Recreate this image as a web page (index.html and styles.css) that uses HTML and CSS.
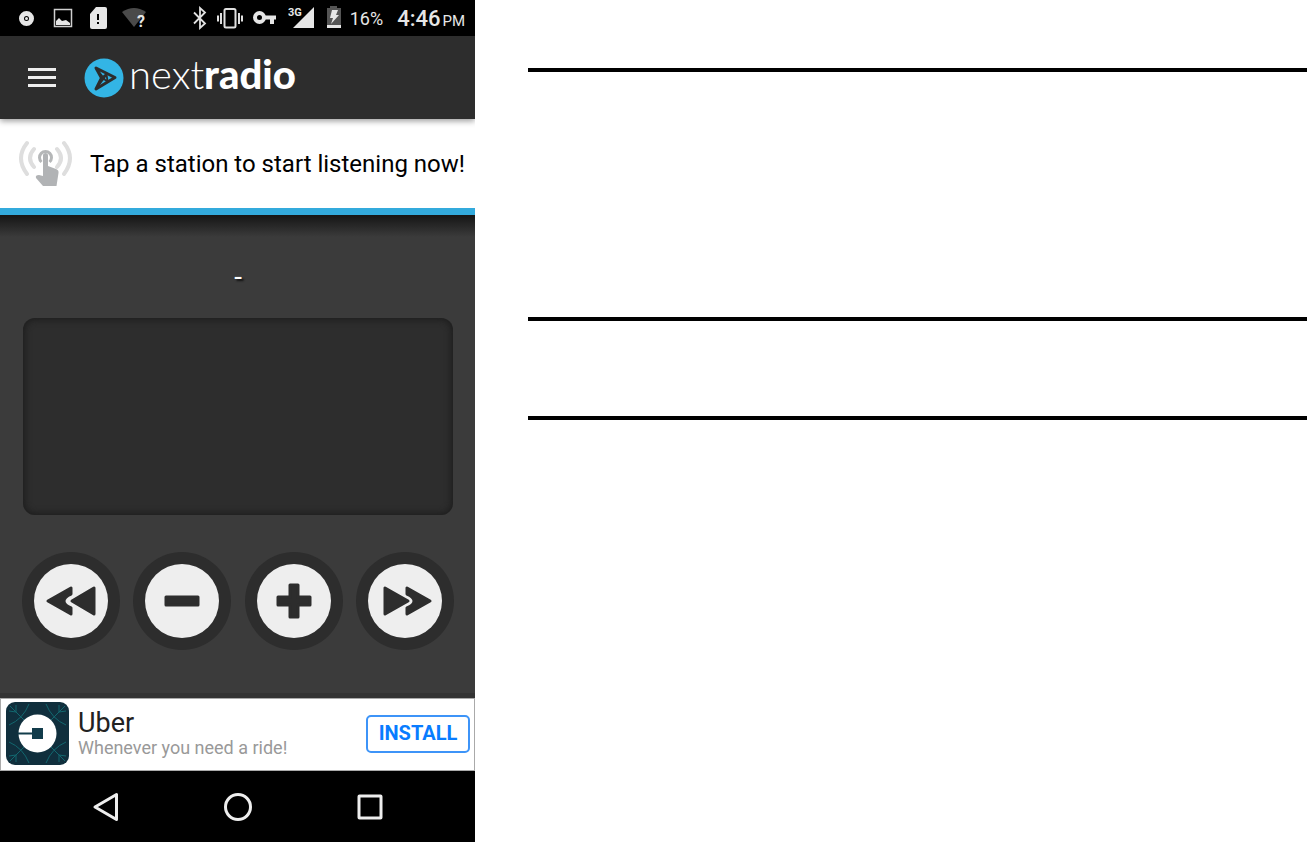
FILE: index.html
```html
<!DOCTYPE html>
<html lang="en">
  <head>
    <meta charset="UTF-8" />
    <meta name="viewport" content="width=device-width, initial-scale=1.0" />
    <title>NextRadio</title>
    <link rel="stylesheet" href="styles.css">
  </head>

  <body>
    <div class="page">
      <main class="phone">
        <div class="status">
          <svg width="20" height="24" viewBox="0 0 20 24">
            <circle cx="8.500" cy="12.500" r="5" fill="none" stroke="#e6e6e6" stroke-width="5" />
            <circle cx="8.500" cy="12.500" r="1.500" fill="#e6e6e6" />
          </svg>
          <svg width="22" height="24" viewBox="0 0 22 24">
            <rect x="2.500" y="3.500" width="17" height="17" fill="none" stroke="#cfcfcf" stroke-width="1.500" />
            <path d="M4 19v-4l3-3 3 3 4-1 4 3v2z" fill="#e6e6e6" />
          </svg>
          <svg width="20" height="24" viewBox="0 0 20 24">
            <path d="M8 1h9q2 0 2 2v18q0 2-2 2H4q-2 0-2-2V8z" fill="#e6e6e6" />
            <path d="M9 8h2v6H9zM9 16h2v2H9z" fill="#000" />
          </svg>
          <svg width="26" height="24" viewBox="0 0 26 24">
            <path d="M0 6q12-8 24 0L12 21z" fill="#4a4a4a" />
            <text x="15" y="21" class="unknown">?</text>
          </svg>

          <div class="status-right">
            <svg width="18" height="24" viewBox="0 0 18 24">
              <path d="M4 6.500l11 11-5 4.500V2l5 4.500-11 11" fill="none" stroke="#e0e0e0" stroke-width="1.800" />
            </svg>
            <svg width="28" height="24" viewBox="0 0 28 24">
              <rect x="8.500" y="3" width="11" height="18.500" rx="1.500" fill="none" stroke="#e0e0e0" stroke-width="2" />
              <path d="M5 7v11M2 9.500v6M23 7v11M26 9.500v6" stroke="#e0e0e0" stroke-width="2" />
            </svg>
            <svg width="28" height="24" viewBox="0 0 28 24">
              <circle cx="7.500" cy="11.500" r="4.500" fill="none" stroke="#e6e6e6" stroke-width="4" />
              <path d="M12 9.500h12v4h-2V18h-4v-4.500h-6z" fill="#e6e6e6" />
            </svg>
            <svg width="28" height="24" viewBox="0 0 28 24">
              <path d="M26 1v21H5z" fill="#e6e6e6" />
              <text x="0" y="10" class="network">3G</text>
            </svg>
            <svg width="18" height="24" viewBox="0 0 18 24">
              <path d="M6 0h7v2h4v20H3V2h3z" fill="#555" />
              <path d="M3 19h14v3H3z" fill="#e6e6e6" />
              <path d="M8 4h6l-2 5h3l-8 9 2-6H6z" fill="#e6e6e6" />
            </svg>
            <span>16%</span>
            <span class="clock">4:46<small>PM</small></span>
          </div>
        </div>

        <header class="header">
          <button class="menu" aria-label="Menu"><i></i><i></i><i></i></button>
          <a href="#" class="logo">
            <svg width="40" height="40" viewBox="0 0 40 40">
              <circle cx="20" cy="20" r="19.500" fill="#33b5e5" />
              <path d="M12 10l19 9.500L12 31l5.500-11z" fill="none" stroke="#2d2d2d" stroke-width="3" stroke-linejoin="round" />
              <path d="M12 10l10 13M12 31l11-15M17.500 20l5-4 1 7z" fill="none" stroke="#2d2d2d" stroke-width="1.800" />
            </svg>
            <span>next<b>radio</b></span>
          </a>
        </header>

        <div class="tip">
          <svg width="56" height="50" viewBox="0 0 56 50">
            <g fill="none" stroke="#dedede" stroke-width="4" stroke-linecap="round">
              <path d="M9 4Q-3 19 9 35M16 10q-8 9 0 18M46 4q12 15 0 31M39 10q8 9 0 18" />
            </g>
            <path d="M23.500 23a6 6 0 1 1 8 0" fill="none" stroke="#b5b7b8" stroke-width="3" />
            <path d="M25 16q0-2 2.500-2t2.500 2v11l8 3q3 1 2.500 4l-2 13H25l-7-8q-1-3 3-3l4 1z" fill="#b1b3b5" />
          </svg>
          <p>Tap a station to start listening now!</p>
        </div>

        <section class="tuner">
          <div class="frequency">-</div>
          <div class="display"></div>
          <div class="controls">
            <button aria-label="Seek down">
              <svg width="74" height="74" viewBox="0 0 74 74">
                <path d="M60 24v26L38 37z" />
                <path d="M37 24v6q-7 3-7 7t7 7v6L14 37z" />
              </svg>
            </button>
            <button aria-label="Tune down">
              <svg width="74" height="74" viewBox="0 0 74 74">
                <path d="M21 33h32v8H21z" />
              </svg>
            </button>
            <button aria-label="Tune up">
              <svg width="74" height="74" viewBox="0 0 74 74">
                <path d="M33 21h8v12h12v8H41v12h-8V41H21v-8h12z" />
              </svg>
            </button>
            <button aria-label="Seek up">
              <svg width="74" height="74" viewBox="0 0 74 74">
                <path d="M17 24v26l23-13z" />
                <path d="M39 24v6q7 3 7 7t-7 7v6l23-13z" />
              </svg>
            </button>
          </div>
        </section>

        <div class="ad">
          <svg width="63" height="63" viewBox="0 0 63 63">
            <rect width="63" height="63" rx="9" fill="#102f3d" />
            <g fill="none" stroke="#12676f" stroke-width="1">
              <path d="M3 23Q17 17 23 2M4 4l17 17M60 23Q46 17 40 2M59 4L42 21M3 40q14 6 20 21M4 59l17-17M60 40q-14 6-20 21M59 59L42 42M3 9l7 1V3M60 9l-7 1V3M3 54l7-1v7M60 54l-7-1v7" />
            </g>
            <circle cx="31.500" cy="31.500" r="19" fill="#fff" />
            <path d="M12 30.500h14V26h11v11H26v-4.500H12z" fill="#123c4b" />
          </svg>
          <div class="ad-text">
            <h2>Uber</h2>
            <p>Whenever you need a ride!</p>
          </div>
          <button class="install">INSTALL</button>
        </div>

        <nav class="nav">
          <button aria-label="Back">
            <svg width="30" height="30" viewBox="0 0 30 30"><path d="M25.500 2.500v25L4 15z" /></svg>
          </button>
          <button aria-label="Home">
            <svg width="30" height="30" viewBox="0 0 30 30"><circle cx="15" cy="15" r="12.500" /></svg>
          </button>
          <button aria-label="Recent apps">
            <svg width="30" height="30" viewBox="0 0 30 30"><rect x="4" y="4" width="22" height="22" rx="0.500" /></svg>
          </button>
        </nav>
      </main>

      <div class="notes">
        <hr />
        <hr />
        <hr />
      </div>
    </div>
  </body>
</html>
```
FILE: styles.css
```css
* {
  box-sizing: border-box;
}
body {
  margin: 0;
  background: #fff;
  font-family: Roboto, "Liberation Sans", sans-serif;
}
button {
  padding: 0;
  border: none;
  background: none;
  font-family: inherit;
}
svg {
  display: block;
  flex: none;
}
p,
h2 {
  margin: 0;
  font-weight: 400;
}
.page {
  display: grid;
  grid-template-columns: 475px 1fr;
  column-gap: 53px;
  min-height: 100vh;
}
.phone {
  display: flex;
  flex-direction: column;
  overflow: hidden;
  background: #3b3b3b;
}

/* status bar */
.status {
  display: flex;
  align-items: center;
  gap: 14px;
  height: 36px;
  padding: 0 10px 0 18px;
  background: #000;
  color: #e6e6e6;
  font-size: 18px;
}
.status-right {
  display: flex;
  align-items: center;
  gap: 8px;
  margin-left: auto;
  white-space: nowrap;
}
.clock {
  margin-left: 6px;
  font-size: 22px;
  font-weight: 500;
}
.clock small {
  margin-left: 2px;
  font-size: 15px;
  font-weight: 400;
}
.unknown {
  fill: #e6e6e6;
  font-size: 16px;
  font-weight: 700;
}
.network {
  fill: #e6e6e6;
  font-size: 11px;
  font-weight: 700;
}

/* app bar */
.header {
  position: relative;
  display: flex;
  align-items: center;
  gap: 28px;
  height: 83px;
  padding: 0 28px;
  background: #2d2d2d;
  box-shadow: 0 2px 6px rgba(0, 0, 0, 0.4);
}
.menu {
  display: grid;
  gap: 5px;
  width: 28px;
}
.menu i {
  height: 3px;
  background: #eee;
}
.logo {
  display: flex;
  align-items: center;
  gap: 5px;
  color: #fff;
  font-family: Lato, sans-serif;
  font-size: 40px;
  font-weight: 300;
  line-height: 32px;
  text-decoration: none;
}
.logo span {
  padding-bottom: 8px;
}
.logo b {
  font-weight: 900;
}

.tip {
  display: flex;
  align-items: center;
  gap: 16px;
  height: 96px;
  padding: 0 0 0 18px;
  border-bottom: 7px solid #33aadc;
  background: #fff;
  color: #000;
  font-size: 24px;
  white-space: nowrap;
}

/* tuner */
.tuner {
  flex: 1;
  padding: 48px 21px 43px 22px;
  border-bottom: 5px solid #333;
  background: linear-gradient(#151515, #3b3b3b 22px);
}
.frequency {
  height: 55px;
  color: #fff;
  font-size: 28px;
  line-height: 28px;
  text-align: center;
  text-shadow: 2px 2px 2px #111;
}
.display {
  height: 197px;
  margin: 0 1px 37px;
  border-radius: 12px;
  background: #2d2d2d;
  box-shadow: inset 0 0 6px 2px #1e1e1e;
}
.controls {
  display: flex;
  justify-content: space-between;
}
.controls button {
  padding: 12px;
  border-radius: 50%;
  background: #2d2d2d;
}
.controls svg {
  border-radius: 50%;
  background: #eee;
  fill: #2d2d2d;
  stroke: #2d2d2d;
  stroke-width: 3;
  stroke-linejoin: round;
}

/* ad banner */
.ad {
  display: flex;
  align-items: center;
  height: 73px;
  padding: 0 4px 2px;
  border: 1px solid #aaa;
  background: #fff;
}
.ad svg {
  margin: 0 9px 0 1px;
}
.ad h2 {
  color: #222;
  font-size: 27px;
  line-height: 28px;
}
.ad-text {
  color: #999;
  font-size: 18px;
  line-height: 22px;
}
.install {
  width: 104px;
  height: 38px;
  margin-left: auto;
  padding-bottom: 2px;
  border: 2px solid #3d94f8;
  border-radius: 5px;
  color: #087cff;
  font-size: 20px;
  font-weight: 700;
}

.nav {
  display: flex;
  justify-content: center;
  gap: 102px;
  height: 71px;
  background: #000;
}
.nav svg {
  fill: none;
  stroke: #eee;
  stroke-width: 3;
  stroke-linejoin: round;
}

/* ruled area beside the phone */
.notes {
  padding-top: 68px;
}
.notes hr {
  height: 4px;
  margin: 0 0 95px;
  border: none;
  background: #000;
}
.notes hr:first-child {
  margin-bottom: 245px;
}
```
